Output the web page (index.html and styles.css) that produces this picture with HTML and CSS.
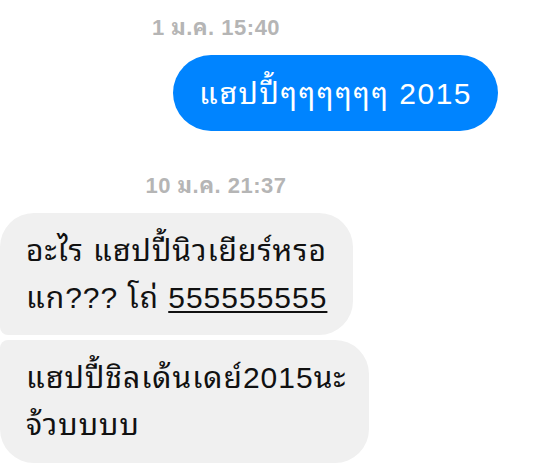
FILE: index.html
```html
<!DOCTYPE html>
<html lang="th">
<head>
  <meta charset="UTF-8">
  <title>Messages</title>
  <link rel="stylesheet" href="styles.css">
</head>
<body>
  <div class="thread">
    <div class="stamp">1 ม.ค. 15:40</div>

    <div class="row out">
      <div class="bubble">แฮปปี้ๆๆๆๆๆๆ 2015</div>
    </div>

    <div class="stamp">10 ม.ค. 21:37</div>

    <div class="group in">
      <div class="bubble first">อะไร แฮปปี้นิวเยียร์หรอ<br>แก??? โถ่ <a class="num" href="#">555555555</a></div>
      <div class="bubble last">แฮปปี้ชิลเด้นเดย์2015นะ<br>จ้วบบบบ</div>
    </div>
  </div>
</body>
</html>
```

FILE: styles.css
```css
body {
  margin: 0;
  padding: 0;
  background: #fff;
  font-family: "Liberation Sans", "Noto Sans Thai Looped", Thonburi, Loma, "Noto Sans Thai", sans-serif;
  color: #111;
}

.thread {
  width: 533px;
  padding-top: 16px;
}

/* time separators */
.stamp {
  padding-right: 101px;
  margin-bottom: 15px;
  text-align: center;
  font-size: 22px;
  font-weight: bold;
  letter-spacing: 0.5px;
  line-height: 24px;
  color: #b5b5b5;
}

.bubble {
  font-size: 30px;
  line-height: 47px;
  padding: 14px 26px;
  white-space: nowrap;
}

/* sent */
.row.out {
  display: flex;
  justify-content: flex-end;
  padding-right: 35px;
  margin-bottom: 43px;
}
.out .bubble {
  background-color: #0084ff;
  color: #fff;
  letter-spacing: 1.5px;
  border-radius: 38px;
  padding: 15px 26px 14px;
}

/* received */
.group.in {
  display: flex;
  flex-direction: column;
  align-items: flex-start;
  gap: 5px;
}
.in .bubble {
  background-color: #f0f0f0;
  letter-spacing: 1px;
}
.in .bubble.first {
  border-radius: 34px 34px 34px 8px;
  padding-right: 26px;
}
.in .bubble.last {
  border-radius: 8px 34px 34px 34px;
  padding-right: 23px;
  padding-bottom: 15px;
}

.num {
  color: inherit;
  text-decoration: underline;
  text-decoration-thickness: 2px;
  text-underline-offset: 3px;
}
```
